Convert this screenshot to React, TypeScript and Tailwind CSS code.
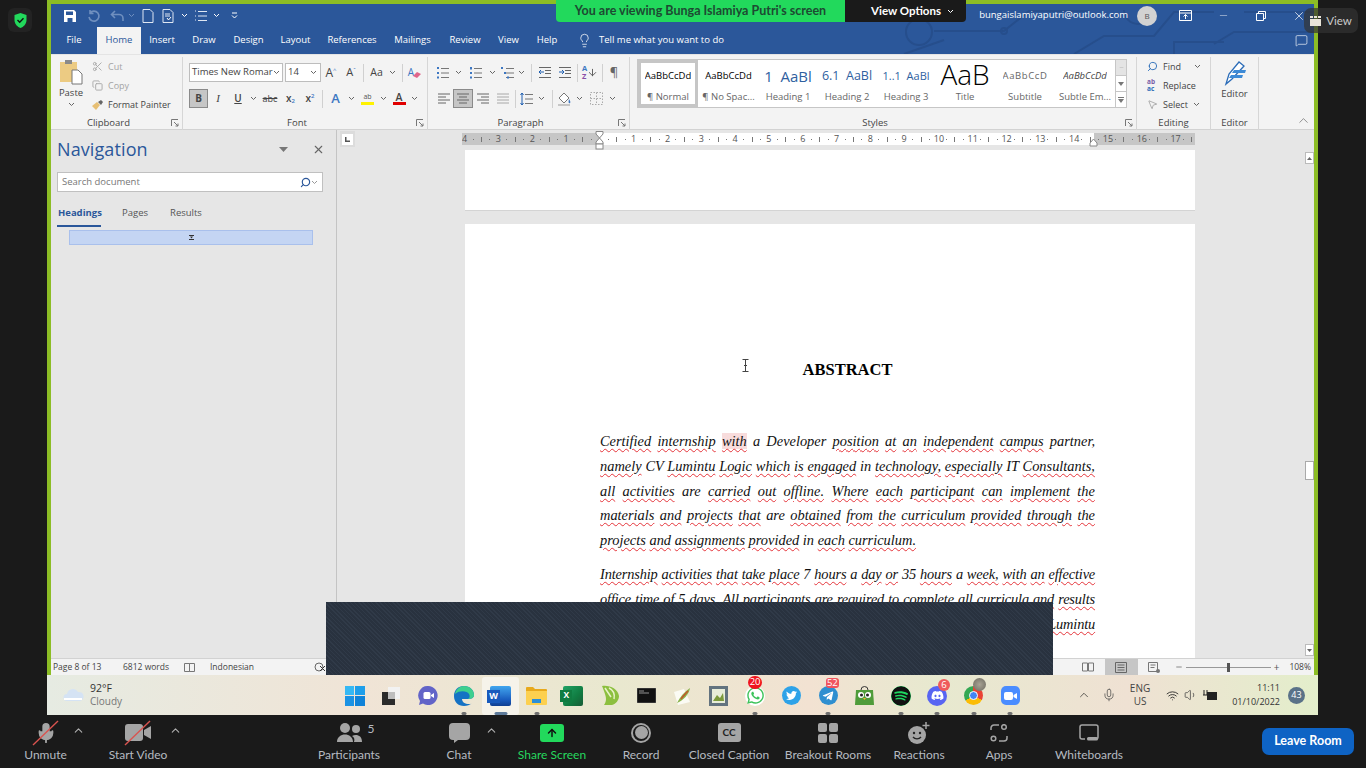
import React from 'react';
import { Scissors, Copy, X, Minus, Search, Lightbulb, MessageSquare, ChevronUp, Mic, Wifi, Volume1, MousePointer2, ArrowUp } from 'lucide-react';
import { FaWhatsapp, FaTwitter, FaTelegramPlane, FaSpotify, FaDiscord } from 'react-icons/fa';

const Ch = ({ c = '#666' }: { c?: string }) => (
  <svg width="7" height="5" viewBox="0 0 7 5" className="shrink-0"><path d="M1 1l2.5 2.5L6 1" fill="none" stroke={c} /></svg>
);

const Cell = ({ className = '', children }: { className?: string; children?: React.ReactNode }) => (
  <div className={`flex items-center justify-center shrink-0 h-full ${className}`}>{children}</div>
);

const Divider = () => <div className="w-px h-[18px] bg-[#d0d0d0] shrink-0" />;

const Launcher = () => (
  <svg width="8" height="8" viewBox="0 0 8 8" className="absolute right-[3px] top-[2px]"><path d="M.5 7V.5H7M3 3l4 4M4.5 7H7V4.5" fill="none" stroke="#777" /></svg>
);

function Group({ className, label, launcher, children }: { className: string; label: string; launcher?: boolean; children: React.ReactNode }) {
  return (
    <div className={`shrink-0 flex flex-col h-[73px] border-r border-[#d6d6d6] ${className}`}>
      <div className="h-[60px]">{children}</div>
      <div className={`relative h-[13px] flex items-center justify-center text-[9.5px] text-[#444] ${launcher ? 'pr-[16px]' : ''}`}>
        {label}
        {launcher && <Launcher />}
      </div>
    </div>
  );
}

const Lines = ({ kind }: { kind: 'l' | 'c' | 'r' | 'j' }) => {
  const rows: Record<string, string> = {
    l: 'M1 2h12M1 5h8M1 8h12M1 11h8',
    c: 'M1 2h12M3 5h8M1 8h12M3 11h8',
    r: 'M1 2h12M5 5h8M1 8h12M5 11h8',
    j: 'M1 2h12M1 5h12M1 8h12M1 11h12',
  };
  return <svg width="14" height="13" viewBox="0 0 14 13"><path d={rows[kind]} stroke={kind === 'j' ? '#a8a8a8' : '#666'} /></svg>;
};

const ListIcon = ({ mark }: { mark: string }) => (
  <svg width="14" height="14" viewBox="0 0 14 14">
    <path d="M5 2.5h8M5 7h8M5 11.5h8" stroke="#777" />
    <path d={mark} fill="#3d77c2" />
  </svg>
);

function StyleItem({ sample, label, className = '', selected }: { sample: React.ReactNode; label: string; className?: string; selected?: boolean }) {
  return (
    <div className={`shrink-0 h-full flex flex-col items-center overflow-hidden ${selected ? 'border-[3px] border-[#c6c6c6]' : 'border-[3px] border-transparent'} ${className}`}>
      <div className="h-[28px] flex items-center whitespace-nowrap overflow-hidden">{sample}</div>
      <div className="text-[9.5px] text-[#666] whitespace-nowrap leading-[14px]">{label}</div>
    </div>
  );
}

const wordsOf = (line: string) =>
  line.split(' ').map((w, i) => {
    const plain = w.startsWith('^');
    const pink = w.startsWith('#');
    const text = plain || pink ? w.slice(1) : w;
    return (
      <React.Fragment key={i}>
        {i > 0 && ' '}
        <span className={`${plain ? '' : 'underline decoration-wavy decoration-[#e5343a] decoration-1 underline-offset-[2px]'} ${pink ? 'bg-[#f8dcdc]' : ''}`}>{text}</span>
      </React.Fragment>
    );
  });

const para1 = [
  'Certified internship #with ^a ^Developer position at an independent campus ^partner,',
  'namely ^CV Lumintu Logic which is engaged ^in technology, especially ^IT Consultants,',
  'all activities ^are carried out offline. Where each participant can implement the',
  'materials and projects that ^are obtained from the curriculum provided through the',
];
const para2 = [
  'Internship activities that take place ^7 hours ^a day or ^35 hours ^a week, with an effective',
  'office time of ^5 days. All participants are required to complete all curricula and results',
  'obtained will be collected and assessed by the mentors at CV Lumintu',
];

const Line = ({ text, last }: { text: string; last?: boolean }) => (
  <div className={`whitespace-nowrap ${last ? '' : 'text-justify [text-align-last:justify] whitespace-normal'}`}>{wordsOf(text)}</div>
);

function Ruler() {
  const cells: React.ReactNode[] = [];
  for (let n = -4; n <= 17; n++) {
    cells.push(<div key={`n${n}`} className="w-[8.46px] shrink-0 text-center text-[9px] leading-[12px] text-[#555]">{n === 0 ? '' : Math.abs(n)}</div>);
    cells.push(<div key={`a${n}`} className="w-[8.46px] shrink-0 flex justify-center"><div className="w-px h-px bg-[#777]" /></div>);
    cells.push(<div key={`b${n}`} className="w-[8.46px] shrink-0 flex justify-center"><div className="w-px h-[5px] bg-[#777]" /></div>);
    cells.push(<div key={`c${n}`} className="w-[8.46px] shrink-0 flex justify-center"><div className="w-px h-px bg-[#777]" /></div>);
  }
  return (
    <div className="relative w-[733px] h-[12px] mt-[3px] ml-[125px]">
      <div className="h-full overflow-hidden flex items-center bg-[linear-gradient(to_right,#c6c6c6_138px,#fff_138px,#fff_632px,#c6c6c6_632px)]">
        <div className="flex items-center shrink-0 -ml-[1.6px]">{cells}</div>
      </div>
      <svg width="10" height="22" viewBox="0 0 10 22" className="absolute left-[133px] -top-[2px]">
        <path d="M1 .5h7V3L4.5 7 1 3zM4.5 7L8 11v2H1v-2z" fill="#fff" stroke="#888" />
        <rect x="1" y="13" width="7" height="5" fill="#fff" stroke="#888" />
      </svg>
      <svg width="10" height="9" viewBox="0 0 10 9" className="absolute left-[627px] top-[5px]">
        <path d="M1 8V5l3.5-4L8 5v3z" fill="#fff" stroke="#888" />
      </svg>
    </div>
  );
}

function ZoomItem({ className, label, labelClass = 'text-[#b6bac1]', caret, children }: { className: string; label: string; labelClass?: string; caret?: string; children: React.ReactNode }) {
  return (
    <div className={`relative shrink-0 flex flex-col items-center h-full ${className}`}>
      <div className="h-[31px] mt-[2px] flex items-center justify-center">{children}</div>
      <div className={`text-[12px] leading-[16px] mt-[-1px] whitespace-nowrap ${labelClass}`}>{label}</div>
      {caret && <ChevronUp size={13} strokeWidth={2} color="#b0b0b0" className={`absolute top-[9px] ${caret}`} />}
    </div>
  );
}

const Slash = () => (
  <svg width="34" height="28" viewBox="0 0 34 28" className="absolute left-1/2 top-1/2 -translate-x-1/2 -translate-y-1/2">
    <path d="M4 26L29 2" stroke="#d9534f" strokeWidth="1.4" />
  </svg>
);

function TbIcon({ dot, active, badge, children }: { dot?: boolean; active?: boolean; badge?: React.ReactNode; children: React.ReactNode }) {
  return (
    <div className={`relative w-[36.4px] h-[38px] shrink-0 flex items-center justify-center rounded-[3px] ${active ? 'bg-[#f6f3ea]' : ''}`}>
      {children}
      {badge}
      {dot && <div className={`absolute bottom-0 left-1/2 -translate-x-1/2 h-[2.5px] rounded-full ${active ? 'w-[13px] bg-[#5e7a99]' : 'w-[5px] bg-[#6f6f6f]'}`} />}
    </div>
  );
}

const Badge = ({ className, children }: { className: string; children: React.ReactNode }) => (
  <div className={`absolute flex items-center justify-center text-white text-[9.5px] leading-none ${className}`}>{children}</div>
);

export default function App() {
  return (
    <div className="relative w-[1366px] h-[768px] overflow-hidden bg-[#1a1a1a] font-['Open_Sans',sans-serif]">
      <div className="flex h-[715px]">
        <div className="w-[47px] shrink-0" />
        <div className="w-[1271px] shrink-0 flex flex-col">
          {/* shared word window */}
          <div className="h-[675px] border-x-4 border-t-4 border-[#8cbd25] bg-[#e6e6e6] flex flex-col overflow-hidden">
            {/* title bar */}
            <div className="relative h-[50px] bg-[#2b579a] shrink-0">
              <svg width="430" height="50" viewBox="0 0 430 50" className="absolute right-0 top-0">
                <g fill="none" stroke="#264e8c" strokeWidth="2">
                  <circle cx="35" cy="28" r="13" />
                  <path d="M50 27h70l25-20h60M190 50l30-18h50l20-24h40M240 6a14 14 0 1 0 28 0M330 40l20-12h80M20 50l40-14M290 50V38h50M360 8h70" />
                  <circle cx="120" cy="27" r="3" />
                </g>
              </svg>
              <div className="relative flex items-center h-[23px] pl-[12px]">
                <svg width="14" height="14" viewBox="0 0 14 14" className="shrink-0"><path d="M1 1h10l2 2v10H1z" fill="#fff" /><path d="M3 2.500h7V6H3z" fill="#2b579a" /><path d="M4.500 9h5v4h-5z" fill="#2b579a" /></svg>
                <Cell className="w-[23px] ml-[5px]"><svg width="14" height="14" viewBox="0 0 14 14"><path d="M3 4a5 5 0 1 1-1 4M3 1v3.5h3.5" fill="none" stroke="#6f8fbf" strokeWidth="1.6" /></svg></Cell>
                <Cell className="w-[20px] ml-[2px]"><svg width="14" height="12" viewBox="0 0 14 12"><path d="M5 1L1.5 4.5 5 8M2 4.500h7a4 4 0 0 1 4 4V11" fill="none" stroke="#6f8fbf" strokeWidth="1.6" /></svg></Cell>
                <Cell className="w-[8px]"><Ch c="#6f8fbf" /></Cell>
                <Cell className="w-[14px] ml-[6px]"><svg width="12" height="14" viewBox="0 0 12 14"><path d="M1 .5h7l3 3v10H1z" fill="none" stroke="#dfe7f3" /></svg></Cell>
                <Cell className="w-[14px] ml-[6px]"><svg width="12" height="14" viewBox="0 0 12 14"><path d="M1 .5h7l3 3v10H1zM3 5h5M3 7h5" fill="none" stroke="#dfe7f3" /><path d="M5 9l1.500 2L9 8" stroke="#fff" fill="none" /></svg></Cell>
                <Cell className="w-[8px] ml-[5px]"><Ch c="#fff" /></Cell>
                <Cell className="w-[14px] ml-[6px]"><svg width="14" height="12" viewBox="0 0 14 12"><path d="M4 1.500h9M4 6h9M4 10.500h9M1 1h1M1 6h1M1 10h1" stroke="#dfe7f3" /></svg></Cell>
                <Cell className="w-[8px] ml-[4px]"><Ch c="#fff" /></Cell>
                <Cell className="w-[8px] ml-[10px]"><svg width="7" height="7" viewBox="0 0 7 7"><path d="M1 1h5M1 3.500l2.500 2.500L6 3.500" fill="none" stroke="#fff" /></svg></Cell>
                <div className="ml-auto flex items-center h-full">
                  <div className="text-[9.500px] text-white whitespace-nowrap">bungaislamiyaputri@outlook.com</div>
                  <div className="w-[20px] h-[20px] ml-[9px] rounded-full bg-[#d2d2d2] flex items-center justify-center text-[8px] text-[#555]">B</div>
                  <Cell className="w-[38px] ml-[9px]"><svg width="13" height="11" viewBox="0 0 13 11"><path d="M.5.500h12v10H.5zM.5 3h12M6.500 9V4.500M4.500 6.500l2-2 2 2" fill="none" stroke="#fff" /></svg></Cell>
                  <Cell className="w-[38px]"><Minus size={11} color="#fff" strokeWidth={1} /></Cell>
                  <Cell className="w-[38px]"><svg width="10" height="10" viewBox="0 0 10 10"><path d="M.5 2.500h7v7h-7zM2.500 2.500v-2h7v7h-2" fill="none" stroke="#fff" /></svg></Cell>
                  <Cell className="w-[38px] mr-[-4px]"><X size={14} color="#fff" strokeWidth={1.2} /></Cell>
                  <div className="w-[0px]" />
                </div>
              </div>
              <div className="relative flex items-end h-[27px] text-[9.5px] text-white">
                <Cell className="w-[46px]">File</Cell>
                <Cell className="w-[44px] bg-[#f3f3f3] text-[#2b579a]">Home</Cell>
                <Cell className="w-[42px]">Insert</Cell>
                <Cell className="w-[42px]">Draw</Cell>
                <Cell className="w-[47px]">Design</Cell>
                <Cell className="w-[47px]">Layout</Cell>
                <Cell className="w-[66px]">References</Cell>
                <Cell className="w-[55px]">Mailings</Cell>
                <Cell className="w-[50px]">Review</Cell>
                <Cell className="w-[37px]">View</Cell>
                <Cell className="w-[40px]">Help</Cell>
                <Cell className="w-[17px] ml-[9px]"><Lightbulb size={15} strokeWidth={1.2} color="#fff" /></Cell>
                <div className="ml-[6px] h-full flex items-center whitespace-nowrap">Tell me what you want to do</div>
                <div className="ml-auto mr-[6px] h-full flex items-center"><MessageSquare size={13} strokeWidth={1.2} color="#fff" /></div>
              </div>
            </div>

            {/* ribbon */}
            <div className="relative h-[76px] shrink-0 bg-[#f3f3f3] border-t border-[#e4e4e4] border-b border-b-[#d2d2d2] flex pt-[2px] text-[#444]">
              <Group className="w-[132px]" label="Clipboard" launcher>
                <div className="flex h-full">
                  <div className="w-[40px] flex flex-col items-center pt-[1px]">
                    <svg width="24" height="27" viewBox="0 0 24 27">
                      <path d="M1 4h17v20H1z" fill="#eccb83" />
                      <path d="M6 2h7v4H6z" fill="#8a8a8a" />
                      <path d="M13 12h6l4 4v10H13z" fill="#fff" stroke="#777" />
                    </svg>
                    <div className="text-[9.5px] leading-[12px] mt-[2px]">Paste</div>
                    <div className="mt-[3px]"><Ch /></div>
                  </div>
                  <div className="flex flex-col">
                    <div className="h-[19px] flex items-center gap-[5px] text-[#a4a4a4] text-[9px]"><Scissors size={11} className="ml-[1px]" color="#a8a8a8" />Cut</div>
                    <div className="h-[19px] flex items-center gap-[5px] text-[#a4a4a4] text-[9px]"><Copy size={11} className="ml-[1px]" color="#a8a8a8" />Copy</div>
                    <div className="h-[19px] flex items-center gap-[4px] text-[9px] whitespace-nowrap">
                      <svg width="13" height="12" viewBox="0 0 13 12"><path d="M1 7l5-4 3 3-4 5z" fill="#e7bf73" /><path d="M7 3l3-2 2 2-2 3z" fill="#666" /></svg>
                      Format Painter
                    </div>
                  </div>
                </div>
              </Group>

              <Group className="w-[245px]" label="Font" launcher>
                <div className="pl-[6px] pt-[6px] flex flex-col gap-[7px]">
                  <div className="h-[19px] flex items-center">
                    <div className="w-[94px] shrink-0 h-full border border-[#bdbdbd] bg-white flex items-center justify-between pl-[2px] pr-[3px] text-[9.500px] whitespace-nowrap overflow-hidden">Times New Romar<Ch /></div>
                    <div className="w-[36px] shrink-0 h-full ml-[2px] border border-[#bdbdbd] bg-white flex items-center justify-between pl-[2px] pr-[3px] text-[9.500px]">14<Ch /></div>
                    <Cell className="w-[20px] text-[12px]">A<sup className="text-[6px] text-[#3d77c2]">^</sup></Cell>
                    <Cell className="w-[20px] text-[11px]">A<sup className="text-[6px] text-[#3d77c2]">ˇ</sup></Cell>
                    <div className="ml-[2px]"><Divider /></div>
                    <Cell className="w-[25px] text-[10.500px]">Aa</Cell>
                    <Ch />
                    <div className="ml-[6px]"><Divider /></div>
                    <Cell className="w-[24px] text-[10px] text-[#3d77c2] relative"><span>A</span><svg width="10" height="8" viewBox="0 0 10 8" className="-ml-[2px] mt-[4px]"><path d="M1 5l4-4 4 2-4 4z" fill="#e0668a" /></svg></Cell>
                  </div>
                  <div className="h-[19px] flex items-center">
                    <div className="w-[19px] h-full bg-[#c6c6c6] border border-[#8a8a8a] flex items-center justify-center text-[10px] font-bold">B</div>
                    <Cell className="w-[20px] text-[11px] italic font-['Liberation_Serif',serif]">I</Cell>
                    <Cell className="w-[20px] text-[10px] font-semibold underline">U</Cell>
                    <Cell className="w-[10px]"><Ch /></Cell>
                    <Cell className="w-[24px] text-[9px] line-through">abc</Cell>
                    <Cell className="w-[17px] text-[10px] font-semibold">x<span className="text-[6px] text-[#3d77c2] mt-[5px]">2</span></Cell>
                    <Cell className="w-[22px] text-[10px] font-semibold">x<span className="text-[6px] text-[#3d77c2] mb-[5px]">2</span></Cell>
                    <div className="ml-[1px]"><Divider /></div>
                    <Cell className="w-[25px] text-[13px] font-semibold text-[#3d77c2]">A</Cell>
                    <Ch />
                    <Cell className="w-[25px]"><div className="flex flex-col items-center leading-none"><span className="text-[7px] text-[#555]">ab</span><div className="w-[13px] h-[3px] bg-[#fff200] mt-[2px]" /></div></Cell>
                    <Ch />
                    <Cell className="w-[24px]"><div className="flex flex-col items-center leading-none"><span className="text-[10.500px] font-semibold">A</span><div className="w-[13px] h-[3px] bg-[#e00000]" /></div></Cell>
                    <Ch />
                  </div>
                </div>
              </Group>

              <Group className="w-[202px]" label="Paragraph" launcher>
                <div className="pt-[6px] flex flex-col gap-[7px]">
                  <div className="h-[19px] flex items-center pl-[7px]">
                    <Cell className="w-[16px]"><ListIcon mark="M1 1h2v2H1zM1 6h2v2H1zM1 10.500h2v2H1z" /></Cell>
                    <Cell className="w-[14px]"><Ch /></Cell>
                    <Cell className="w-[18px] ml-[2px]"><ListIcon mark="M1 1h2v2.500H1zM1 6h2v2H1zM1 10.500h2v2H1z" /></Cell>
                    <Cell className="w-[14px]"><Ch /></Cell>
                    <Cell className="w-[18px]"><ListIcon mark="M0 1h2v2H0zM3 6h2v2H3zM6 10.500h2v2H6z" /></Cell>
                    <Cell className="w-[8px]"><Ch /></Cell>
                    <div className="ml-[6px]"><Divider /></div>
                    <Cell className="w-[20px] ml-[3px]"><svg width="14" height="13" viewBox="0 0 14 13"><path d="M1 1.500h12M7 4.500h6M7 7.500h6M1 11.500h12" stroke="#666" /><path d="M6 6H1M3 4L1 6l2 2" stroke="#1f5fb0" fill="none" /></svg></Cell>
                    <Cell className="w-[20px]"><svg width="14" height="13" viewBox="0 0 14 13"><path d="M1 1.500h12M7 4.500h6M7 7.500h6M1 11.500h12" stroke="#666" /><path d="M1 6h5M4 4l2 2-2 2" stroke="#1f5fb0" fill="none" /></svg></Cell>
                    <div className="ml-[2px]"><Divider /></div>
                    <Cell className="w-[24px]"><div className="flex flex-col text-[7.500px] leading-[7.500px] font-bold"><span className="text-[#3d77c2]">A</span><span className="text-[#8a4fa8]">Z</span></div><ArrowUp size={11} className="rotate-180" color="#555" /></Cell>
                    <Divider />
                    <Cell className="w-[22px] text-[13px] text-[#666]">¶</Cell>
                  </div>
                  <div className="h-[19px] flex items-center pl-[7px]">
                    <Cell className="w-[18px]"><Lines kind="l" /></Cell>
                    <div className="w-[20px] shrink-0 h-full bg-[#c6c6c6] border border-[#8a8a8a] flex items-center justify-center"><Lines kind="c" /></div>
                    <Cell className="w-[20px]"><Lines kind="r" /></Cell>
                    <Cell className="w-[20px]"><Lines kind="j" /></Cell>
                    <div className="ml-[2px]"><Divider /></div>
                    <Cell className="w-[20px]"><svg width="13" height="14" viewBox="0 0 13 14"><path d="M5 2.500h8M5 7h8M5 11.500h8" stroke="#777" /><path d="M2 1v12M.5 3L2 1l1.500 2M.5 11L2 13l1.500-2" stroke="#1f5fb0" fill="none" /></svg></Cell>
                    <Cell className="w-[10px]"><Ch /></Cell>
                    <div className="ml-[6px]"><Divider /></div>
                    <Cell className="w-[22px]"><svg width="15" height="15" viewBox="0 0 15 15"><path d="M2 7l5-5 5 5-5 5z" fill="#fff" stroke="#777" /><path d="M12 8c1 2 2 3 1 4s-2 0-1-4z" fill="#3d77c2" /><path d="M1 14h12" stroke="#999" /></svg></Cell>
                    <Cell className="w-[8px]"><Ch /></Cell>
                    <Cell className="w-[14px] ml-[6px]"><svg width="13" height="13" viewBox="0 0 13 13"><path d="M.5.500h12v12H.5zM6.500.500v12M.5 6.500h12" fill="none" stroke="#aaa" strokeDasharray="1.500 1.500" /></svg></Cell>
                    <Cell className="w-[10px] ml-[4px]"><Ch /></Cell>
                  </div>
                </div>
              </Group>

              <Group className="w-[507px]" label="Styles" launcher>
                <div className="pl-[7px] pt-[2px] h-full">
                  <div className="w-[490px] h-[49px] flex border border-[#c6c6c6] bg-white">
                    <StyleItem className="w-[60px]" selected label="¶ Normal" sample={<span className="text-[9.500px] text-black">AaBbCcDd</span>} />
                    <StyleItem className="w-[61px]" label="¶ No Spac..." sample={<span className="text-[9.500px] text-black">AaBbCcDd</span>} />
                    <StyleItem className="w-[58px]" label="Heading 1" sample={<span className="text-[15px] text-[#2f5f9f]">1&nbsp; AaBl</span>} />
                    <StyleItem className="w-[60px]" label="Heading 2" sample={<span className="text-[12.500px] text-[#2f5f9f]">6.1&nbsp; AaBl</span>} />
                    <StyleItem className="w-[58px]" label="Heading 3" sample={<span className="text-[11px] text-[#2f5f9f]">1..1&nbsp; AaBl</span>} />
                    <StyleItem className="w-[60px]" label="Title" sample={<span className="text-[28px] text-black font-light leading-[24px] -mt-[6px]">AaB</span>} />
                    <StyleItem className="w-[60px]" label="Subtitle" sample={<span className="text-[9.500px] tracking-[0.6px] text-[#666]">AaBbCcD</span>} />
                    <StyleItem className="w-[60px]" label="Subtle Em..." sample={<span className="text-[9.500px] italic text-[#444]">AaBbCcDd</span>} />
                    <div className="w-[11px] ml-auto flex flex-col border-l border-[#c6c6c6]">
                      <Cell className="h-[16px]! bg-[#e4e4e4] border-b border-[#c6c6c6] text-[#aaa]"><Minus size={5} /></Cell>
                      <Cell className="h-[16px]! border-b border-[#c6c6c6]"><svg width="6" height="4" viewBox="0 0 6 4"><path d="M0 0h6L3 4z" fill="#777" /></svg></Cell>
                      <Cell className="h-[15px]!"><svg width="6" height="6" viewBox="0 0 6 6"><path d="M0 0h6v1H0zM0 2h6L3 6z" fill="#777" /></svg></Cell>
                    </div>
                  </div>
                </div>
              </Group>

              <Group className="w-[74px]" label="Editing">
                <div className="pl-[10px] text-[9px]">
                  <div className="h-[19px] flex items-center gap-[5px]"><Search size={11} className="-scale-x-100" color="#2b6cb8" />Find<div className="ml-[8px]"><Ch /></div></div>
                  <div className="h-[19px] flex items-center gap-[4px]"><span className="text-[6.500px] leading-[6.500px] w-[12px] font-bold text-[#7a5fa8]">ab<br /><span className="text-[#2b6cb8]">ac</span></span>Replace</div>
                  <div className="h-[19px] flex items-center gap-[5px]"><MousePointer2 size={11} color="#777" strokeWidth={1.200} />Select<Ch /></div>
                </div>
              </Group>

              <Group className="w-[48px]" label="Editor">
                <div className="flex flex-col items-center pt-[3px]">
                  <svg width="26" height="26" viewBox="0 0 26 26">
                    <path d="M4 24L7 14 17 2l5 4-12 13z" fill="#fff" stroke="#2b6cb8" strokeWidth="1.300" />
                    <path d="M12 10h12l-1 3H10zM9 15h12l-1 3H7z" fill="#3d8ad6" />
                  </svg>
                  <div className="text-[9.5px] leading-[12px] mt-[2px]">Editor</div>
                </div>
              </Group>
              <div className="absolute right-[3px] bottom-[1px]"><ChevronUp size={15} strokeWidth={1} color="#555" /></div>
            </div>

            {/* main */}
            <div className="flex h-[528px] shrink-0">
              <div className="w-[286px] shrink-0 border-r border-[#c4c4c4] px-[6px]">
                <div className="flex items-center h-[39px]">
                  <div className="text-[18px] text-[#2b579a] tracking-[0.1px]">Navigation</div>
                  <svg width="9" height="5" viewBox="0 0 9 5" className="ml-auto mr-[24px]"><path d="M0 0h9L4.500 5z" fill="#777" /></svg>
                  <X size={13} color="#666" className="mr-[5px]" />
                </div>
                <div className="w-[266px] h-[20px] mt-[3px] bg-white border border-[#c0c0c0] flex items-center px-[4px] text-[9.500px] text-[#777]">
                  Search document
                  <Search size={11} strokeWidth={2.500} className="ml-auto -scale-x-100 mr-[1px] translate-x-[3px]" color="#2b579a" />
                  <div className="ml-[2px]"><Ch c="#999" /></div>
                </div>
                <div className="flex h-[31px] mt-[11px] text-[9.5px] text-[#555]">
                  <div className="w-[44px] h-[24px] flex items-start border-b-2 border-[#2b579a] font-bold text-[#2b579a] whitespace-nowrap pt-[3px] pl-[1px]">Headings</div>
                  <div className="ml-[21px] pt-[3px]">Pages</div>
                  <div className="ml-[22px] pt-[3px]">Results</div>
                </div>
                <div className="ml-[12px] w-[244px] h-[15px] -mt-[4px] bg-[#c4d5f3] border border-[#a9c0ec] flex items-center justify-center">
                  <svg width="5" height="5" viewBox="0 0 5 5"><path d="M0 0h5v1H0zM0 4h5v1H0zM1 1.500h3L2.500 3.500z" fill="#333" /></svg>
                </div>
              </div>

              <div className="flex-1 min-w-0 flex flex-col relative overflow-hidden">
                <div className="absolute left-[3px] top-[1px] w-[15px] h-[16px] bg-[#dcdcdc] flex items-center justify-center">
                  <div className="w-[11px] h-[11px] bg-white flex items-center justify-center"><svg width="5" height="5" viewBox="0 0 5 5"><path d="M0 0h1.500v3.500H5V5H0z" fill="#555" /></svg></div>
                </div>
                <div className="h-[20px] shrink-0"><Ruler /></div>
                <div className="flex min-h-0 flex-1">
                  <div className="w-[968px] pl-[128px] overflow-hidden">
                    <div className="w-[730px] h-[61px] bg-white border-b border-[#d4d4d4] mb-[13px]" />
                    <div className="w-[730px] h-[440px] bg-white pl-[135px] pr-[100px] pt-[134px] font-['Liberation_Serif',serif] text-[14.4px] text-[#111] leading-[24.800px]">
                      <div className="font-bold text-[16.500px] text-black text-center mb-[47px] leading-[24px]">ABSTRACT</div>
                      <div className="italic mb-[9.300px]">
                        {para1.map((t) => <Line key={t} text={t} />)}
                        <Line last text="projects and assignments provided ^in each curriculum." />
                      </div>
                      <div className="italic tracking-[-0.15px]">
                        {para2.map((t) => <Line key={t} text={t} />)}
                      </div>
                    </div>
                  </div>
                  <div className="w-[9px] shrink-0 flex flex-col items-center pt-[2px]">
                    <div className="w-[9px] h-[12px] bg-white border border-[#bbb] flex items-center justify-center"><svg width="5" height="3" viewBox="0 0 5 3"><path d="M0 3h5L2.500 0z" fill="#666" /></svg></div>
                    <div className="w-[9px] h-[19px] mt-[297px] bg-white border border-[#aaa]" />
                    <div className="w-[9px] h-[12px] mt-auto mb-[2px] bg-white border border-[#bbb] flex items-center justify-center"><svg width="5" height="3" viewBox="0 0 5 3"><path d="M0 0h5L2.500 3z" fill="#666" /></svg></div>
                  </div>
                </div>
              </div>
            </div>

            {/* status bar */}
            <div className="h-[17px] shrink-0 bg-[#f3f3f3] border-t border-[#d2d2d2] flex items-center text-[8.500px] text-[#444]">
              <div className="ml-[2px] w-[70px] whitespace-nowrap">Page 8 of 13</div>
              <div className="w-[61px] whitespace-nowrap">6812 words</div>
              <svg width="12" height="11" viewBox="0 0 12 11"><path d="M.5 1.500h5v8h-5zM5.500 1.500h5v8h-5z" fill="none" stroke="#777" /></svg>
              <div className="ml-[14px] whitespace-nowrap">Indonesian</div>
              <svg width="12" height="12" viewBox="0 0 12 12" className="ml-[60px]"><circle cx="5" cy="6" r="4" fill="none" stroke="#666" /><path d="M6 5l5 5M11 5l-5 5" stroke="#333" /></svg>
              <div className="ml-auto flex items-center h-full">
                <svg width="12" height="10" viewBox="0 0 12 10"><path d="M.5 1h5v8h-5zM6.500 1h5v8h-5z" fill="none" stroke="#777" /></svg>
                <div className="w-[33px] h-full ml-[11px] bg-[#c6c6c6] flex items-center justify-center"><svg width="12" height="11" viewBox="0 0 12 11"><path d="M.5.500h11v10H.5zM2.500 3h7M2.500 5.500h7M2.500 8h7" fill="none" stroke="#666" /></svg></div>
                <svg width="12" height="11" viewBox="0 0 12 11" className="ml-[10px]"><path d="M.5.500h9v9H.5zM2.500 3h5M2.500 5.500h4" fill="none" stroke="#777" /><circle cx="10" cy="9" r="2" fill="#777" /></svg>
                <Minus size={8} className="ml-[15px]" color="#555" />
                <div className="relative w-[85px] h-px bg-[#999] ml-[3px] flex items-center justify-center"><div className="w-[3px] h-[9px] bg-[#555] shrink-0" /></div>
                <div className="ml-[3px] text-[10px] leading-none text-[#555]">+</div>
                <div className="ml-[10px] mr-[3px] whitespace-nowrap">108%</div>
              </div>
            </div>
          </div>

          {/* windows taskbar */}
          <div className="h-[40px] shrink-0 grid grid-cols-[1fr_auto_1fr] items-center bg-[linear-gradient(90deg,#e6ebe2,#f0e4d6_25%,#e9e8cf_45%,#f2e2d2_60%,#e7e9cf_70%,#efe1d3_85%,#e3eecb)]">
            <div className="flex items-center pl-[16px]">
              <svg width="21" height="14" viewBox="0 0 21 14"><path d="M4 13a3.500 3.500 0 0 1 0-7 6 6 0 0 1 11-2 4.500 4.500 0 0 1 2 9z" fill="#d5e3f4" /><path d="M1 11h18" stroke="#fff" strokeWidth="2" /></svg>
              <div className="ml-[6px] text-[10px] leading-[13px] text-[#444]">
                <div className="text-[10.500px] text-[#333]">92°F</div>
                <div className="text-[#777]">Cloudy</div>
              </div>
            </div>
            <div className="flex items-center h-full pt-[1px]">
              <TbIcon>
                <div className="grid grid-cols-2 gap-[1px] w-[20px] h-[20px]">
                  <div className="bg-[#35b8f4]" /><div className="bg-[#1e9eea]" /><div className="bg-[#1a92e4]" /><div className="bg-[#0f82d8]" />
                </div>
              </TbIcon>
              <TbIcon>
                <svg width="20" height="20" viewBox="0 0 20 20"><rect x="7" y="1" width="12" height="12" fill="#f2f2f2" /><rect x="1" y="6" width="13" height="13" fill="#2b2b2b" /><rect x="7" y="6" width="7" height="7" fill="#bdbdbd" /></svg>
              </TbIcon>
              <TbIcon>
                <svg width="20" height="20" viewBox="0 0 20 20"><path d="M10 0a9.500 9.500 0 1 1-5 17.500L1 19l1-4A9.500 9.500 0 0 1 10 0z" fill="#6264c8" /><rect x="5.500" y="6" width="7" height="7" rx="1.500" fill="#fff" /><path d="M13 9l3-2v5l-3-2z" fill="#fff" /></svg>
              </TbIcon>
              <TbIcon dot>
                <svg width="20" height="20" viewBox="0 0 20 20"><path d="M10 0c6 0 10 4 10 9 0 3-3 4-6 4H8c0 3 3 5 7 5 1 0 2 0 3-1-2 2-5 3-8 3C4 20 0 16 0 10S4 0 10 0z" fill="#1572c4" /><path d="M1 8c1-5 5-8 9-8 6 0 10 4 10 9 0 3-3 4-6 4 2-1 2-3 1-5-2-3-9-4-14 0z" fill="#3ecf8e" /><path d="M8 13h6c-2 0-5 0-6 0z" fill="#1572c4" /></svg>
              </TbIcon>
              <TbIcon dot active>
                <div className="relative w-[21px] h-[20px] rounded-[2px] bg-[linear-gradient(180deg,#41a5ee,#2b7cd3_40%,#185abd_70%,#103f91)]">
                  <div className="absolute -left-[3px] top-[4px] w-[13px] h-[13px] bg-[#185abd] flex items-center justify-center text-[9px] font-bold text-white">W</div>
                </div>
              </TbIcon>
              <TbIcon dot>
                <svg width="21" height="19" viewBox="0 0 21 19"><path d="M0 2a1 1 0 0 1 1-1h6l2 2h11a1 1 0 0 1 1 1v2H0z" fill="#e8a91c" /><path d="M0 5h21v13a1 1 0 0 1-1 1H1a1 1 0 0 1-1-1z" fill="#fcd04f" /><rect x="6" y="13" width="9" height="4" fill="#2b8fd8" /></svg>
              </TbIcon>
              <TbIcon>
                <div className="relative w-[20px] h-[20px] rounded-[2px] bg-[linear-gradient(135deg,#21a366,#107c41_60%,#185c37)]">
                  <div className="absolute -left-[3px] top-[4px] w-[12px] h-[12px] bg-[#107c41] flex items-center justify-center text-[8.500px] font-bold text-white">X</div>
                </div>
              </TbIcon>
              <TbIcon>
                <svg width="20" height="21" viewBox="0 0 20 21"><path d="M2 1c8-1 16 3 17 10 0 4-3 8-7 9H4C7 16 6 12 5 9 4 6 3 3 2 1z" fill="#8cbf3f" /><path d="M5 3l6 9M9 3c4 2 6 6 5 11" stroke="#e8f2c8" strokeWidth="1.500" fill="none" /></svg>
              </TbIcon>
              <TbIcon>
                <svg width="19" height="15" viewBox="0 0 19 15"><rect width="19" height="15" fill="#111" stroke="#888" strokeWidth="0.600" /><path d="M2 3h5M2 5h10" stroke="#ccc" strokeWidth="0.700" /></svg>
              </TbIcon>
              <TbIcon>
                <svg width="20" height="20" viewBox="0 0 20 20"><path d="M2 6l10-3 6 13-12 3z" fill="#fbfbf4" /><path d="M5 17c3-6 7-11 13-15-1 6-6 12-13 15z" fill="#8ab24a" /><path d="M9 13c2-3 4-5 7-8" stroke="#c8562c" strokeWidth="1.500" /></svg>
              </TbIcon>
              <TbIcon>
                <svg width="19" height="20" viewBox="0 0 19 20"><rect width="19" height="20" fill="#63737f" /><rect x="3" y="3" width="13" height="14" fill="#e8edd8" /><path d="M4 15l4-6 3 3 3-5 1 8z" fill="#7c9a3c" /></svg>
              </TbIcon>
              <TbIcon dot badge={<Badge className="left-[11px] top-[-1px] w-[14px] h-[13px] rounded-full bg-[#f0141e]">20</Badge>}>
                <div className="w-[20px] h-[20px] rounded-full bg-white flex items-center justify-center"><FaWhatsapp size={19} color="#3cc35a" /></div>
              </TbIcon>
              <TbIcon>
                <div className="w-[19px] h-[19px] rounded-full bg-[#2ea2e8] flex items-center justify-center"><FaTwitter size={11} color="#fff" /></div>
              </TbIcon>
              <TbIcon dot badge={<Badge className="left-[16px] top-[1px] w-[13px] h-[10px] rounded-[3px] bg-[#f0555e] text-[7.500px]">52</Badge>}>
                <div className="w-[19px] h-[19px] rounded-full bg-[#2f8fd0] flex items-center justify-center"><FaTelegramPlane size={12} color="#fff" /></div>
              </TbIcon>
              <TbIcon>
                <svg width="19" height="21" viewBox="0 0 19 21"><path d="M1 5h17l1 15H0z" fill="#4f9c3a" /><path d="M6 5a3.500 3.500 0 0 1 7 0" fill="none" stroke="#333" /><circle cx="6" cy="10" r="3" fill="#fff" /><circle cx="13" cy="10" r="3" fill="#fff" /><circle cx="6.500" cy="10" r="1.500" fill="#222" /><circle cx="12.500" cy="10" r="1.500" fill="#222" /><path d="M8 13h3l-1.500 2z" fill="#f2b632" /></svg>
              </TbIcon>
              <TbIcon dot>
                <div className="w-[20px] h-[20px] rounded-full bg-[#1ed760] flex items-center justify-center"><FaSpotify size={20} color="#111" className="rounded-full" /></div>
              </TbIcon>
              <TbIcon dot badge={<Badge className="left-[19px] top-[2px] w-[12px] h-[12px] rounded-full bg-[#ef5b5b] text-[8px]">6</Badge>}>
                <div className="w-[20px] h-[20px] rounded-full bg-[#5865f2] flex items-center justify-center"><FaDiscord size={13} color="#fff" /></div>
              </TbIcon>
              <TbIcon dot badge={<div className="absolute left-[18px] top-[1px] w-[13px] h-[13px] rounded-full bg-[radial-gradient(circle,#a8a394,#6d6a60)]" />}>
                <div className="w-[19px] h-[19px] rounded-full bg-[conic-gradient(#ea4335_0_33%,#fbbc05_33%_66%,#34a853_66%_100%)] flex items-center justify-center"><div className="w-[9px] h-[9px] rounded-full bg-[#4285f4] border border-white" /></div>
              </TbIcon>
              <TbIcon dot>
                <div className="w-[19px] h-[19px] rounded-[5px] bg-[#4a8cff] flex items-center justify-center">
                  <svg width="13" height="8" viewBox="0 0 13 8"><rect width="9" height="8" rx="2" fill="#fff" /><path d="M9.500 3L13 1v6L9.500 5z" fill="#fff" /></svg>
                </div>
              </TbIcon>
            </div>
            <div className="flex items-center justify-end pr-[13px] text-[10px] text-[#333]">
              <ChevronUp size={14} strokeWidth={1.200} color="#222" />
              <Mic size={14} strokeWidth={1.200} color="#444" className="ml-[11px]" />
              <div className="ml-[14px] text-center leading-[13px] text-[#444]"><div>ENG</div><div>US</div></div>
              <Wifi size={13} strokeWidth={1.600} color="#222" className="ml-[16px]" />
              <Volume1 size={14} strokeWidth={1.300} color="#444" className="ml-[5px]" />
              <svg width="14" height="11" viewBox="0 0 14 11" className="ml-[5px]"><rect x="4" y="2" width="10" height="8" fill="#222" /><path d="M1 0v5M4 0v5M0 5h5" stroke="#222" /></svg>
              <div className="ml-[15px] text-right text-[9px] leading-[14px] text-[#333]"><div>11:11</div><div>01/10/2022</div></div>
              <div className="ml-[8px] w-[17px] h-[17px] rounded-full bg-[#5a7288] flex items-center justify-center text-[9px] text-white">43</div>
            </div>
          </div>
        </div>
        <div className="flex-1" />
      </div>

      {/* zoom toolbar */}
      <div className="h-[53px] flex font-['Lato',sans-serif]">
        <ZoomItem className="w-[91px]" label="Unmute" caret="right-[6px]">
          <div className="relative">
            <Mic size={22} strokeWidth={2} color="#a5a5a5" fill="#a5a5a5" />
            <Slash />
          </div>
        </ZoomItem>
        <ZoomItem className="w-[94px]" label="Start Video" caret="right-[3px]">
          <div className="relative">
            <svg width="26" height="17" viewBox="0 0 26 17"><rect width="18" height="17" rx="3" fill="#a5a5a5" /><path d="M19 6l7-4v13l-7-4z" fill="#a5a5a5" /></svg>
            <Slash />
          </div>
        </ZoomItem>
        <ZoomItem className="w-[80px] ml-[124px]" label="Participants">
          <div className="relative">
            <svg width="25" height="20" viewBox="0 0 25 20"><circle cx="8" cy="5" r="5" fill="#a5a5a5" /><circle cx="19" cy="6" r="4" fill="#a5a5a5" /><path d="M0 19c0-10 16-10 16 0zM17 19h8c0-7-6-8-10-6 2 1 3 3 2 6z" fill="#a5a5a5" /></svg>
            <span className="absolute -right-[13px] -top-[3px] text-[12px] text-[#b6bac1]">5</span>
          </div>
        </ZoomItem>
        <ZoomItem className="w-[80px] ml-[30px]" label="Chat" caret="right-[1px]">
          <svg width="21" height="20" viewBox="0 0 21 20"><path d="M4 0h13a4 4 0 0 1 4 4v9a4 4 0 0 1-4 4h-8l-4 3v-3H4a4 4 0 0 1-4-4V4a4 4 0 0 1 4-4z" fill="#a5a5a5" /></svg>
        </ZoomItem>
        <ZoomItem className="w-[80px] ml-[13px]" label="Share Screen" labelClass="text-[#26d85f]">
          <div className="w-[24px] h-[18px] rounded-[3px] bg-[#22d95c] flex items-center justify-center"><ArrowUp size={12} strokeWidth={3} color="#111" /></div>
        </ZoomItem>
        <ZoomItem className="w-[80px] ml-[9px]" label="Record">
          <div className="w-[20px] h-[20px] rounded-full border-2 border-[#a5a5a5] flex items-center justify-center"><div className="w-[13px] h-[13px] rounded-full bg-[#a5a5a5]" /></div>
        </ZoomItem>
        <ZoomItem className="w-[80px] ml-[8px]" label="Closed Caption">
          <div className="w-[23px] h-[19px] rounded-[3px] bg-[#a5a5a5] flex items-center justify-center text-[10px] font-bold text-[#222]">CC</div>
        </ZoomItem>
        <ZoomItem className="w-[88px] ml-[15px]" label="Breakout Rooms">
          <div className="grid grid-cols-2 gap-[2px] w-[20px] h-[20px]">
            <div className="bg-[#a5a5a5] rounded-[2px]" /><div className="bg-[#a5a5a5] rounded-[2px]" /><div className="bg-[#a5a5a5] rounded-[2px]" /><div className="bg-[#a5a5a5] rounded-[2px]" />
          </div>
        </ZoomItem>
        <ZoomItem className="w-[80px] ml-[7px]" label="Reactions">
          <svg width="22" height="22" viewBox="0 0 22 22"><circle cx="9" cy="13" r="9" fill="#a5a5a5" /><circle cx="6" cy="11" r="1.200" fill="#222" /><circle cx="12" cy="11" r="1.200" fill="#222" /><path d="M5 15c2 2.500 6 2.500 8 0" stroke="#222" strokeWidth="1.300" fill="none" /><path d="M18 0v7M14.500 3.500h7" stroke="#a5a5a5" strokeWidth="1.500" /></svg>
        </ZoomItem>
        <ZoomItem className="w-[80px]" label="Apps">
          <svg width="18" height="18" viewBox="0 0 18 18" fill="none" stroke="#a5a5a5" strokeWidth="1.500"><path d="M1 6V4a3 3 0 0 1 3-3h5M17 12v2a3 3 0 0 1-3 3H9" /><circle cx="14" cy="3" r="2.300" /><circle cx="3.500" cy="14.500" r="2.300" /></svg>
        </ZoomItem>
        <ZoomItem className="w-[80px] ml-[10px]" label="Whiteboards">
          <svg width="20" height="18" viewBox="0 0 20 18" fill="none"><path d="M6 15H3a2 2 0 0 1-2-2V3a2 2 0 0 1 2-2h14a2 2 0 0 1 2 2v10a2 2 0 0 1-2 2" stroke="#a5a5a5" strokeWidth="1.500" /><rect x="8" y="13" width="11" height="3.500" rx="1.500" fill="#a5a5a5" /></svg>
        </ZoomItem>
        <div className="ml-auto mr-[12px] mt-[13px] w-[92px] h-[27px] rounded-[7px] bg-[#0e63c4] flex items-center justify-center text-[12.500px] font-bold text-white">Leave Room</div>
      </div>

      {/* overlays from the meeting app */}
      <div className="absolute left-[556px] top-0 w-[410px] h-[22px] flex rounded-b-[4px] overflow-hidden text-[12.500px] font-['Lato',sans-serif] font-bold">
        <div className="w-[289px] bg-[#22d95c] flex items-center justify-center text-[#1d4a32]">You are viewing Bunga Islamiya Putri's screen</div>
        <div className="flex-1 bg-[#1a1a1a] flex items-center justify-center gap-[6px] pl-[14px] text-white text-[11.500px]">View Options <Ch c="#fff" /></div>
      </div>
      <div className="absolute left-[1304px] top-[8px] w-[54px] h-[25px] rounded-[7px] bg-[#333]/70 flex items-center justify-center gap-[5px] text-[11.500px] text-[#ccc] font-['Lato',sans-serif]">
        <svg width="11" height="10" viewBox="0 0 11 10"><path d="M0 3h11v7H0zM0 0h3v2H0zM4 0h3v2H4zM8 0h3v2H8z" fill="#e8e4d8" /></svg>View
      </div>
      <div className="absolute left-[8px] top-[8px] w-[24px] h-[24px] rounded-[6px] bg-[#232323] flex items-center justify-center">
        <svg width="13" height="15" viewBox="0 0 13 15"><path d="M6.500 0l6 2v5c0 4-3 7-6 8-3-1-6-4-6-8V2z" fill="#22d95c" /><path d="M3.500 7l2.200 2.200L9.500 5.300" fill="none" stroke="#111" strokeWidth="1.400" /></svg>
      </div>
      <div className="absolute left-[326px] top-[602px] w-[727px] h-[73px] bg-[#2a3340] bg-[repeating-linear-gradient(45deg,#29323f_0,#29323f_2px,#303a48_2px,#303a48_3px)]" />
      <svg width="7" height="13" viewBox="0 0 7 13" className="absolute left-[742px] top-[359px]"><path d="M.5.500h6M.5 12.500h6M3.500.500v12M2 6.500h3" stroke="#444" fill="none" /></svg>
    </div>
  );
}
